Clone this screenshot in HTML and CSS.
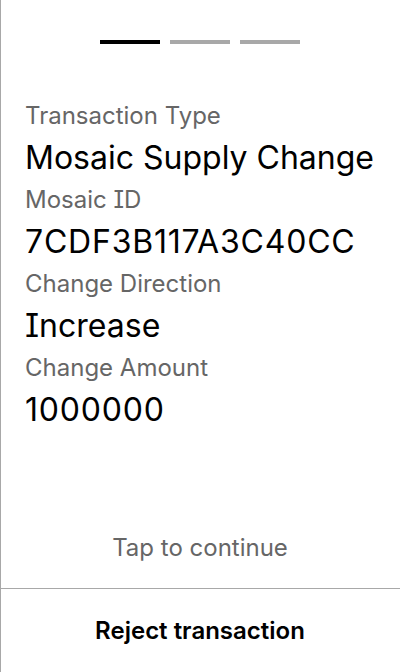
FILE: index.html
```html
<!DOCTYPE html>
<html>
<head>
<meta charset="utf-8">
<link rel="stylesheet" href="styles.css">
</head>
<body>
<div class="screen">
  <div class="main">
    <div class="steps">
      <span class="step active"></span>
      <span class="step"></span>
      <span class="step"></span>
    </div>
    <div class="fields">
      <div class="label">Transaction Type</div>
      <div class="value">Mosaic Supply Change</div>
      <div class="label">Mosaic ID</div>
      <div class="value num">7CDF3B117A3C40CC</div>
      <div class="label">Change Direction</div>
      <div class="value">Increase</div>
      <div class="label">Change Amount</div>
      <div class="value num">1000000</div>
    </div>
    <div class="tap">Tap to continue</div>
  </div>
  <div class="reject">Reject transaction</div>
</div>
</body>
</html>
```

FILE: styles.css
```css
html, body {
  margin: 0;
  padding: 0;
  background: #fff;
}
body {
  font-family: Inter, "Noto Sans", sans-serif;
  color: #000;
  font-feature-settings: "cv08" 1;
}
.screen {
  width: 400px;
  height: 672px;
  box-sizing: border-box;
  border-left: 1px solid #a8a8a8;
  display: flex;
  flex-direction: column;
}
.main {
  flex: 1;
  display: flex;
  flex-direction: column;
}
.steps {
  display: flex;
  justify-content: center;
  gap: 10px;
  padding-top: 40px;
  margin-left: -1px;
}
.step {
  width: 60px;
  height: 4px;
  background: #a8a8a8;
}
.step.active {
  background: #000;
}
.fields {
  padding: 51px 0 0 24px;
}
.label {
  font-size: 24px;
  line-height: 42px;
  color: #666;
}
.value {
  font-size: 32px;
  line-height: 42px;
  color: #000;
}
.value.num {
  letter-spacing: 0.8px;
}
.tap {
  margin-top: auto;
  text-align: center;
  font-size: 24px;
  line-height: 42px;
  color: #666;
  padding-bottom: 19px;
  margin-left: -1px;
}
.reject {
  border-top: 1px solid #a8a8a8;
  height: 83px;
  display: flex;
  align-items: center;
  justify-content: center;
  font-size: 24px;
  font-weight: 600;
  margin-left: -1px;
}
```
